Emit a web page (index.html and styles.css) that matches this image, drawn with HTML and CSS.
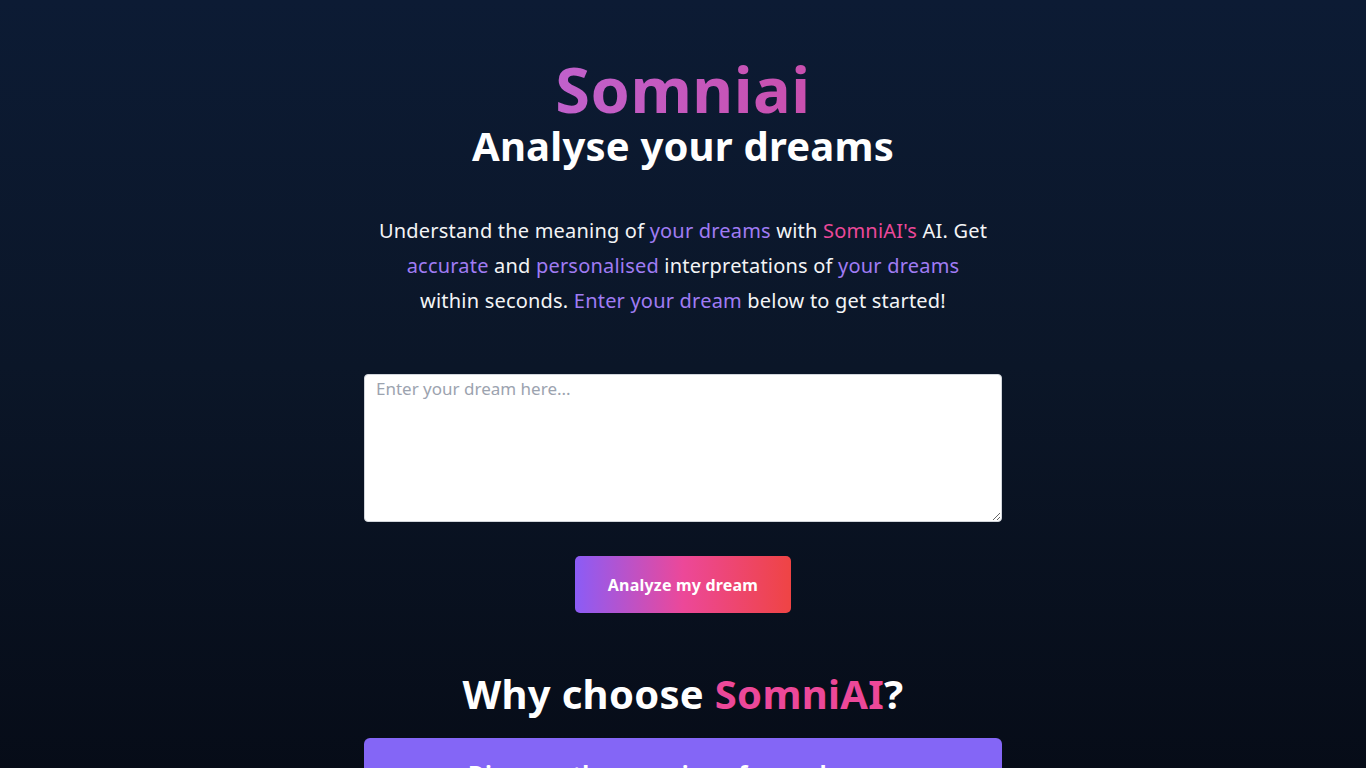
FILE: index.html
```html
<!DOCTYPE html>
<html lang="en">
<head>
<meta charset="utf-8">
<title>Somniai - Analyse your dreams</title>
<link rel="stylesheet" href="styles.css">
</head>
<body>
<main class="page">
  <header class="hero">
    <h1 class="brand">Somniai</h1>
    <h2 class="tagline">Analyse your dreams</h2>
    <p class="intro">
      Understand the meaning of <span class="hl">your dreams</span> with <span class="pink">SomniAI's</span> AI. Get<br>
      <span class="hl">accurate</span> and <span class="hl">personalised</span> interpretations of <span class="hl">your dreams</span><br>
      within seconds. <span class="hl">Enter your dream</span> below to get started!
    </p>
  </header>

  <form class="dream-form">
    <textarea class="dream-input" placeholder="Enter your dream here..."></textarea>
    <button type="button" class="analyze-btn">Analyze my dream</button>
  </form>

  <section class="why">
    <h2 class="why-title">Why choose <span class="pink">SomniAI</span>?</h2>
    <div class="why-card">
      <h3 class="why-card-title">Discover the meaning of your dreams</h3>
    </div>
  </section>
</main>
</body>
</html>
```

FILE: styles.css
```css
* { box-sizing: border-box; }

html, body {
  margin: 0;
  padding: 0;
}

body {
  min-height: 100vh;
  background: linear-gradient(180deg, #0c1b34 0%, #0b1628 45%, #060b16 100%);
  color: #ffffff;
  font-family: "Noto Sans", "Open Sans", sans-serif;
}

.page {
  width: 638px;
  margin: 0 auto;
  padding-top: 57px;
  display: flex;
  flex-direction: column;
  align-items: center;
}

.hero {
  display: flex;
  flex-direction: column;
  align-items: center;
  text-align: center;
}

.brand {
  margin: 0;
  font-size: 63px;
  line-height: 64px;
  font-weight: 700;
  letter-spacing: 0.5px;
  background: linear-gradient(90deg, #c061cc 0%, #c94fae 100%);
  -webkit-background-clip: text;
  background-clip: text;
  color: transparent;
}

.tagline {
  margin: 1px 0 0;
  font-size: 40px;
  line-height: 48px;
  font-weight: 700;
  letter-spacing: 0.2px;
  color: #ffffff;
}

.intro {
  margin: 43px 0 0;
  font-size: 20px;
  line-height: 35px;
  letter-spacing: 0.2px;
  color: #f3f4f6;
}

.hl { color: #a07cf4; }
.pink { color: #ec4899; }

.dream-form {
  width: 100%;
  margin-top: 56px;
  display: flex;
  flex-direction: column;
  align-items: center;
}

.dream-input {
  display: block;
  width: 638px;
  height: 148px;
  padding: 0 11px;
  border: 1px solid #d1d5db;
  border-radius: 4px;
  background: #ffffff;
  font-family: "Noto Sans", "Open Sans", sans-serif;
  font-size: 17px;
  line-height: 28px;
  color: #111827;
  resize: vertical;
}

.dream-input::placeholder { color: #9ca3af; }

.analyze-btn {
  margin-top: 34px;
  width: 216px;
  height: 57px;
  border: 0;
  border-radius: 5px;
  background: linear-gradient(90deg, #8b5cf6 0%, #ec4899 50%, #ef4444 100%);
  color: #ffffff;
  font-family: "Noto Sans", "Open Sans", sans-serif;
  font-size: 16px;
  font-weight: 700;
  letter-spacing: 0.2px;
  cursor: pointer;
}

.why {
  width: 100%;
  margin-top: 53px;
  display: flex;
  flex-direction: column;
  align-items: center;
}

.why-title {
  margin: 0;
  font-size: 40px;
  line-height: 56px;
  font-weight: 700;
  letter-spacing: 0.3px;
  color: #ffffff;
}

.why-card {
  width: 100%;
  margin-top: 16px;
  padding: 20px 20px 24px;
  border-radius: 6px;
  background: #8466f6;
  text-align: center;
}

.why-card-title {
  margin: 0;
  font-size: 23px;
  line-height: 32px;
  font-weight: 700;
  color: #ffffff;
}
```
